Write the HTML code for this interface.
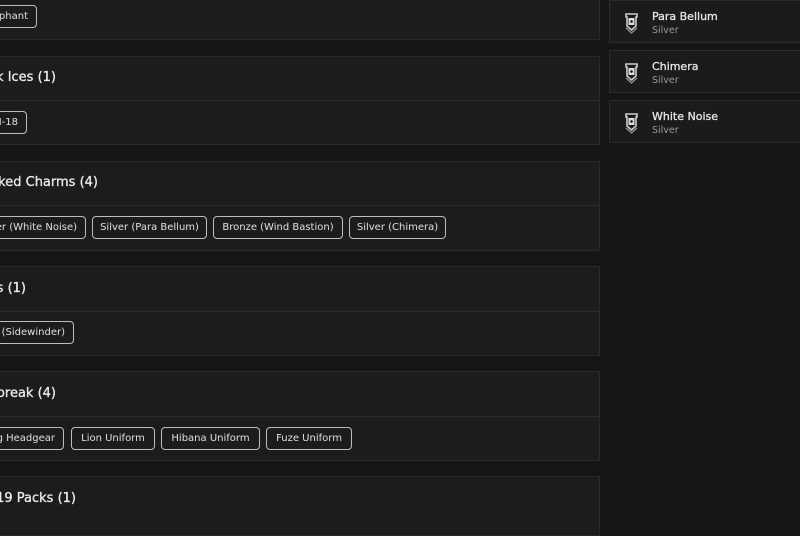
<!DOCTYPE html>
<html><head><style>
body{margin:0;width:800px;height:507px;background:#151515;overflow:hidden;position:relative;font-family:"DejaVu Sans","Liberation Sans",sans-serif;color:#e6e6e6}
.sec{position:absolute;left:-20px;width:620px;background:#1c1c1c;border:1px solid #2a2a2a;box-sizing:border-box}
.hl{position:absolute;left:-20px;width:620px;height:1px;background:#2c2c2c}
.h{position:absolute;white-space:nowrap;font-size:13px;color:#ececec;-webkit-text-stroke:0.3px #ececec}
.t{position:absolute;height:23px;box-sizing:border-box;border:1px solid #bdbdbd;border-radius:4px;font-size:10px;line-height:21px;text-align:center;white-space:nowrap;overflow:hidden;color:#e0e0e0}
.tr{text-align:right;padding-right:8px}
.card{position:absolute;left:609px;width:200px;height:43px;background:#1b1b1b;border:1px solid #2c2c2c;box-sizing:border-box}
.card b{position:absolute;left:42px;top:9px;font-size:11px;font-weight:normal;-webkit-text-stroke:0.3px #e8e8e8;color:#e8e8e8}
.card i{position:absolute;left:42px;top:24px;font-size:9.5px;font-style:normal;color:#9a9a9a}
.card svg{position:absolute;left:13px;top:11px}
</style></head><body>
<div class="sec" style="top:-10px;height:50px"></div>
<div class="t tr" style="left:-60px;width:97px;top:5px">Elephant</div>

<div class="sec" style="top:56px;height:89px"></div><div class="hl" style="top:100px"></div>
<div class="h" style="right:744px;top:70px">Black Ices (1)</div>
<div class="t tr" style="left:-60px;width:87px;top:111px">SH-18</div>

<div class="sec" style="top:161px;height:90px"></div><div class="hl" style="top:205px"></div>
<div class="h" style="right:702px;top:175px">Unlocked Charms (4)</div>
<div class="t tr" style="left:-60px;width:146px;top:216px">Silver (White Noise)</div>
<div class="t" style="left:92px;width:115px;top:216px">Silver (Para Bellum)</div>
<div class="t" style="left:213px;width:130px;top:216px">Bronze (Wind Bastion)</div>
<div class="t" style="left:349px;width:97px;top:216px">Silver (Chimera)</div>

<div class="sec" style="top:266px;height:90px"></div><div class="hl" style="top:311px"></div>
<div class="h" style="right:774px;top:281px">Skins (1)</div>
<div class="t tr" style="left:-60px;width:134px;top:321px">Gold (Sidewinder)</div>

<div class="sec" style="top:371px;height:90px"></div><div class="hl" style="top:416px"></div>
<div class="h" style="right:744px;top:386px">Outbreak (4)</div>
<div class="t tr" style="left:-60px;width:124px;top:427px">Lifting Headgear</div>
<div class="t" style="left:71px;width:84px;top:427px">Lion Uniform</div>
<div class="t" style="left:161px;width:99px;top:427px">Hibana Uniform</div>
<div class="t" style="left:266px;width:86px;top:427px">Fuze Uniform</div>

<div class="sec" style="top:476px;height:60px"></div>
<div class="h" style="right:724px;top:491px">2019 Packs (1)</div>

<div class="card" style="top:0"><svg width="17" height="22" viewBox="0 0 17 22"><path d="M3 2h11v3h-1v9l-4.5 4L4 14V5H3z" fill="none" stroke="#ccc" stroke-width="1.6"/><rect x="5.5" y="6" width="6" height="7" fill="#ddd"/><circle cx="8.5" cy="9.5" r="1.3" fill="#111"/><path d="M3 16l5.5 5 5.5-5" fill="none" stroke="#999" stroke-width="1.2"/></svg><b>Para Bellum</b><i>Silver</i></div>
<div class="card" style="top:50px"><svg width="17" height="22" viewBox="0 0 17 22"><path d="M3 2h11v3h-1v9l-4.5 4L4 14V5H3z" fill="none" stroke="#ccc" stroke-width="1.6"/><rect x="5.5" y="6" width="6" height="7" fill="#ddd"/><circle cx="8.5" cy="9.5" r="1.3" fill="#111"/><path d="M3 16l5.5 5 5.5-5" fill="none" stroke="#999" stroke-width="1.2"/></svg><b>Chimera</b><i>Silver</i></div>
<div class="card" style="top:100px"><svg width="17" height="22" viewBox="0 0 17 22"><path d="M3 2h11v3h-1v9l-4.5 4L4 14V5H3z" fill="none" stroke="#ccc" stroke-width="1.6"/><rect x="5.5" y="6" width="6" height="7" fill="#ddd"/><circle cx="8.5" cy="9.5" r="1.3" fill="#111"/><path d="M3 16l5.5 5 5.5-5" fill="none" stroke="#999" stroke-width="1.2"/></svg><b>White Noise</b><i>Silver</i></div>
</body></html>
